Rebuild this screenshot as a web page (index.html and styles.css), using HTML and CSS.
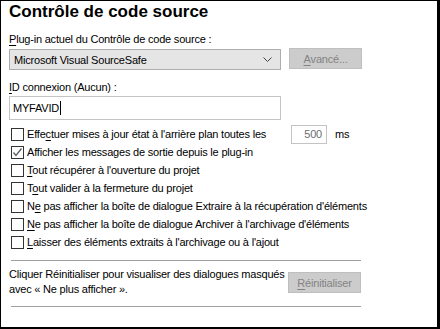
FILE: index.html
```html
<!DOCTYPE html>
<html lang="fr">
<head>
  <meta charset="UTF-8" />
  <title>Contrôle de code source</title>
  <link rel="stylesheet" href="styles.css">
</head>
<body>
  <div class="frame">
    <h1>Contrôle de code source</h1>

    <div class="label"><u>P</u>lug-in actuel du Contrôle de code source :</div>
    <div class="plugin-row">
      <div class="select">
        <span>Microsoft Visual SourceSafe</span>
        <svg class="chevron" width="9" height="5" viewBox="0 0 9 5"><path d="M0.5 0.5 L4.5 4.5 L8.5 0.5" fill="none" stroke="#444" stroke-width="1"/></svg>
      </div>
      <div class="btn disabled"><u>A</u>vancé...</div>
    </div>

    <div class="label"><u>I</u>D connexion (Aucun) :</div>
    <div class="textbox">MYFAVID<span class="caret"></span></div>

    <div class="checks">
      <div class="check-row">
        <span class="box"></span>
        <span class="check-text wide">Effe<u>c</u>tuer mises à jour état à l'arrière plan toutes les</span>
        <span class="number">500</span>
        <span class="unit">ms</span>
      </div>
      <div class="check-row">
        <span class="box checked">
          <svg width="11" height="11" viewBox="0 0 11 11"><path d="M1.5 5.5 L4 8.5 L9.5 1.5" fill="none" stroke="#5c5c5c" stroke-width="1.3"/></svg>
        </span>
        <span class="check-text">Afficher les messages de sortie depuis le plug-in</span>
      </div>
      <div class="check-row">
        <span class="box"></span>
        <span class="check-text"><u>T</u>out récupérer à l'ouverture du projet</span>
      </div>
      <div class="check-row">
        <span class="box"></span>
        <span class="check-text">T<u>o</u>ut valider à la fermeture du projet</span>
      </div>
      <div class="check-row">
        <span class="box"></span>
        <span class="check-text">N<u>e</u> pas afficher la boîte de dialogue Extraire à la récupération d'éléments</span>
      </div>
      <div class="check-row">
        <span class="box"></span>
        <span class="check-text"><u>N</u>e pas afficher la boîte de dialogue Archiver à l'archivage d'éléments</span>
      </div>
      <div class="check-row">
        <span class="box"></span>
        <span class="check-text"><u>L</u>aisser des éléments extraits à l'archivage ou à l'ajout</span>
      </div>
    </div>

    <div class="reset-block">
      <div class="reset-row">
        <p>Cliquer Réinitialiser pour visualiser des dialogues masqués avec « Ne plus afficher ».</p>
        <div class="btn disabled"><u>R</u>éinitialiser</div>
      </div>
    </div>
  </div>
</body>
</html>
```

FILE: styles.css
```css
body {
  margin: 0;
  font-family: 'Liberation Sans', Arial, sans-serif;
  font-size: 11px;
  letter-spacing: -0.2px;
  color: #000;
  background: #fff;
}

.frame {
  width: 440px;
  height: 329px;
  box-sizing: border-box;
  border-top: 1px solid #000;
  border-left: 1px solid #000;
  border-right: 3px solid #000;
  border-bottom: 2px solid #000;
  padding: 0 0 0 8px;
  overflow: hidden;
}

h1 {
  margin: 1px 0 0;
  font-size: 17px;
  line-height: 20px;
  font-weight: bold;
  letter-spacing: 0;
}

u {
  text-decoration-thickness: 1px;
  text-underline-offset: 2px;
}

.label {
  margin-top: 10px;
  line-height: 14px;
}

.plugin-row {
  display: flex;
  align-items: flex-start;
  gap: 8px;
  margin-top: 3px;
}

.select {
  width: 272px;
  height: 21px;
  box-sizing: border-box;
  border: 1px solid #adadad;
  background: #e5e5e5;
  display: flex;
  align-items: center;
  justify-content: space-between;
  padding: 0 8px 0 4px;
}

.btn {
  width: 73px;
  height: 21px;
  box-sizing: border-box;
  border: 1px solid #bfbfbf;
  display: flex;
  align-items: center;
  justify-content: center;
}

.btn.disabled {
  background: #cccccc;
  color: #838383;
}

.plugin-row .btn {
  margin-top: -1px;
}

.textbox {
  width: 272px;
  height: 24px;
  box-sizing: border-box;
  border: 1px solid #c4c4c4;
  margin-top: 2px;
  padding: 0 3px;
  display: flex;
  align-items: center;
}

.caret {
  display: inline-block;
  width: 1px;
  height: 14px;
  background: #000;
  margin-left: 1px;
}

.checks {
  margin-top: 5px;
  padding-left: 2px;
}

.check-row {
  display: flex;
  align-items: center;
  height: 18px;
}

.box {
  width: 13px;
  height: 13px;
  box-sizing: border-box;
  border: 1px solid #333;
  background: #fff;
  flex: none;
  display: flex;
  align-items: center;
  justify-content: center;
}

.check-text {
  margin-left: 3px;
  white-space: nowrap;
}

.check-text.wide {
  width: 264px;
}

.number {
  width: 36px;
  height: 19px;
  box-sizing: border-box;
  border: 1px solid #c4c4c4;
  color: #6d6d6d;
  text-align: right;
  padding-right: 4px;
  line-height: 17px;
}

.unit {
  margin-left: 8px;
}

.reset-block {
  width: 350px;
  margin: 9px 0 0 2px;
  border-top: 1px solid #a0a0a0;
  border-bottom: 1px solid #a0a0a0;
  padding: 6px 0 9px;
}

.reset-row {
  display: flex;
  align-items: flex-start;
  justify-content: space-between;
}

.reset-row p {
  margin: 0 0 0 -2px;
  width: 278px;
  line-height: 15px;
}

.reset-row .btn {
  margin-top: 5px;
}
```
